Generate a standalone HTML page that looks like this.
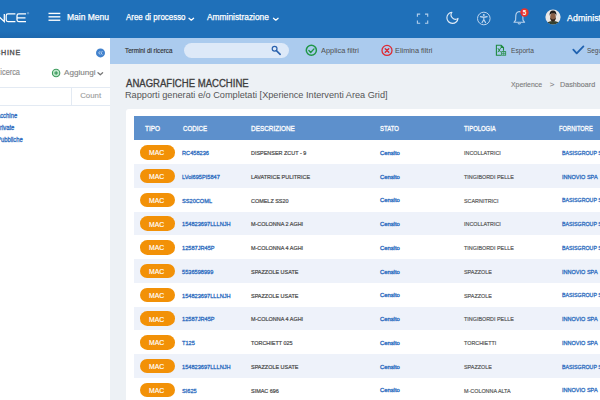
<!DOCTYPE html>
<html><head><meta charset="utf-8">
<style>
*{margin:0;padding:0;box-sizing:border-box}
html,body{width:600px;height:400px;overflow:hidden;background:#edf1f5;font-family:"Liberation Sans",sans-serif;position:relative}
.b{position:absolute}
.t{position:absolute;white-space:nowrap;line-height:1;transform-origin:0 0}
svg{position:absolute;overflow:visible}
</style></head><body>
<div class="b" style="left:0;top:0;width:600px;height:37.5px;background:#1f70b9"></div>
<div class="b" style="left:0;top:37.5px;width:110px;height:362.5px;background:#fff"></div>
<div class="b" style="left:110px;top:37.5px;width:490px;height:26.0px;background:#abcbee"></div>
<div class="b" style="left:0;top:31px;width:110px;height:6.5px;background:linear-gradient(rgba(0,20,60,0),rgba(0,20,60,0.09))"></div>
<!-- sidebar lines -->
<div class="b" style="left:0;top:87px;width:110px;height:1px;background:#e3eaf3"></div>
<div class="b" style="left:0;top:105px;width:110px;height:1px;background:#e3eaf3"></div>
<div class="b" style="left:71px;top:87px;width:1px;height:18px;background:#e3eaf3"></div>
<!-- search input -->
<div class="b" style="left:183.7px;top:42.7px;width:105px;height:15.3px;border-radius:8px;background:#dde9f8"></div>
<!-- card -->
<div class="b" style="left:125.6px;top:109px;width:500px;height:300px;background:#fff;border-radius:3px"></div>
<div class="b" style="left:134px;top:116.3px;width:480px;height:23.95px;background:#5d90cc"></div>
<div class="b" style="left:140px;top:145.00px;width:34.7px;height:14.7px;border-radius:7.35px;background:#f29107"></div>
<div class="b" style="left:134px;top:164.00px;width:480px;height:23.75px;background:#eef2fa"></div>
<div class="b" style="left:140px;top:168.75px;width:34.7px;height:14.7px;border-radius:7.35px;background:#f29107"></div>
<div class="b" style="left:140px;top:192.50px;width:34.7px;height:14.7px;border-radius:7.35px;background:#f29107"></div>
<div class="b" style="left:134px;top:211.50px;width:480px;height:23.75px;background:#eef2fa"></div>
<div class="b" style="left:140px;top:216.25px;width:34.7px;height:14.7px;border-radius:7.35px;background:#f29107"></div>
<div class="b" style="left:140px;top:240.00px;width:34.7px;height:14.7px;border-radius:7.35px;background:#f29107"></div>
<div class="b" style="left:134px;top:259.00px;width:480px;height:23.75px;background:#eef2fa"></div>
<div class="b" style="left:140px;top:263.75px;width:34.7px;height:14.7px;border-radius:7.35px;background:#f29107"></div>
<div class="b" style="left:140px;top:287.50px;width:34.7px;height:14.7px;border-radius:7.35px;background:#f29107"></div>
<div class="b" style="left:134px;top:306.50px;width:480px;height:23.75px;background:#eef2fa"></div>
<div class="b" style="left:140px;top:311.25px;width:34.7px;height:14.7px;border-radius:7.35px;background:#f29107"></div>
<div class="b" style="left:140px;top:335.00px;width:34.7px;height:14.7px;border-radius:7.35px;background:#f29107"></div>
<div class="b" style="left:134px;top:354.00px;width:480px;height:23.75px;background:#eef2fa"></div>
<div class="b" style="left:140px;top:358.75px;width:34.7px;height:14.7px;border-radius:7.35px;background:#f29107"></div>
<div class="b" style="left:140px;top:382.50px;width:34.7px;height:14.7px;border-radius:7.35px;background:#f29107"></div>


<!-- logo -->
<svg style="left:0;top:0" width="40" height="37" viewBox="0 0 40 37">
 <g fill="none" stroke="#fff" stroke-width="1.25" stroke-linecap="butt">
  <path d="M-4 21.6 L-4 13.9 L4.3 21.6 L4.3 13.9"/>
  <path d="M15.4 13.9 L8 13.9 Q6.2 13.9 6.2 15.7 L6.2 19.8 Q6.2 21.6 8 21.6 L15.4 21.6"/>
  <path d="M26 13.9 L18.8 13.9 Q17 13.9 17 15.7 L17 19.8 Q17 21.6 18.8 21.6 L26 21.6 M17 17.75 L25.5 17.75"/>
 </g>
 <circle cx="28" cy="13.2" r="0.8" fill="none" stroke="#cfe0f3" stroke-width="0.4"/>
</svg>
<!-- hamburger -->
<svg style="left:0;top:0" width="70" height="37" viewBox="0 0 70 37">
 <rect x="48.5" y="12.75" width="11.8" height="1.35" fill="#fff"/><rect x="48.5" y="16.15" width="11.8" height="1.35" fill="#fff"/><rect x="48.5" y="19.55" width="11.8" height="1.35" fill="#fff"/>
</svg>
<!-- nav chevrons -->
<svg style="left:0;top:0" width="600" height="37" viewBox="0 0 600 37">
 <g fill="none" stroke="#fff" stroke-width="1.3" stroke-linecap="round" stroke-linejoin="round">
  <path d="M189 18.3 L191.3 20.2 L193.6 18.3"/>
  <path d="M273.5 18.3 L275.8 20.2 L278.1 18.3"/>
 </g>
 <!-- fullscreen -->
 <g fill="none" stroke="#b4cfec" stroke-width="1.1">
  <path d="M417.4 16.8 V14.1 H420.2 M425 14.1 H427.7 V16.8 M427.7 20.5 V23.2 H425 M420.2 23.2 H417.4 V20.5"/>
 </g>
 <!-- moon -->
 <path transform="translate(445 10.4) scale(0.62)" d="M21 12.79A9 9 0 1 1 11.21 3 7 7 0 0 0 21 12.79z" fill="none" stroke="#e2ecf7" stroke-width="1.8" stroke-linejoin="round"/>
 <!-- accessibility -->
 <g fill="none" stroke="#bcd4ee" stroke-width="1">
  <circle cx="483.8" cy="18.5" r="6.3"/>
  <path d="M480.4 16.6 Q483.8 17.6 487.2 16.6 M483.8 17.2 L483.8 19.6 L482 22.6 M483.8 19.6 L485.6 22.6" stroke-width="1.1" stroke-linecap="round"/>
 </g>
 <circle cx="483.8" cy="15" r="1" fill="#bcd4ee"/>
 <!-- bell -->
 <g fill="none" stroke="#bcd4ee" stroke-width="1.1" stroke-linejoin="round">
  <path d="M514 22.3 L524.6 22.3 L523 20.2 L522.8 15.6 Q522.6 12 519.3 11.5 Q516 12 515.8 15.6 L515.6 20.2 Z"/>
  <path d="M517.9 23.4 Q519.3 24.6 520.7 23.4"/>
 </g>
 <circle cx="524.5" cy="12.5" r="4.2" fill="#e8332a"/>
</svg>
<svg style="left:0;top:0" width="600" height="37" viewBox="0 0 600 37"><text x="524.6" y="14.7" font-family="Liberation Sans" font-weight="bold" font-size="6.3" fill="#fff" text-anchor="middle">5</text></svg>
<!-- avatar -->
<svg style="left:0;top:0" width="600" height="37" viewBox="0 0 600 37">
 <defs><clipPath id="av"><circle cx="553" cy="17" r="7.6"/></clipPath></defs>
 <circle cx="553" cy="17" r="7.6" fill="#ebe8e6"/>
 <g clip-path="url(#av)">
  <path d="M545 26 Q546.5 21.2 553 21 Q559.5 21.2 561 26 Z" fill="#35402f"/>
  <ellipse cx="553" cy="16.8" rx="2.8" ry="3.9" fill="#8a5f45"/>
  <path d="M549.6 16 Q549.2 10.6 553 10.6 Q556.8 10.6 556.4 16 Q555.8 13 553 13.2 Q550.2 13 549.6 16 Z" fill="#231d1a"/>
  <path d="M550.1 17.2 Q550.4 21.4 553 21.4 Q555.6 21.4 555.9 17.2 Q555 19.3 553 19.4 Q551 19.3 550.1 17.2 Z" fill="#33261e"/>
 </g>
</svg>

<!-- sidebar collapse -->
<svg style="left:0;top:37px" width="111" height="110" viewBox="0 37 111 110">
 <circle cx="100.5" cy="52.9" r="4.5" fill="#4282cd"/>
 <g fill="none" stroke="#e8f0fa" stroke-width="0.75" stroke-linecap="round" stroke-linejoin="round">
  <path d="M99.9 51.5 L98.7 52.9 L99.9 54.3 M102.1 51.5 L100.9 52.9 L102.1 54.3"/>
 </g>
 <!-- green plus -->
 <circle cx="56.1" cy="73" r="3.7" fill="#bfe6cb" stroke="#3d9c5c" stroke-width="1.1"/>
 <path d="M56.1 71.1 V74.9 M54.2 73 H58" stroke="#1f8a45" stroke-width="0.9"/>
 <!-- chevron -->
 <path d="M98 72.8 L100.3 74.8 L102.6 72.8" fill="none" stroke="#777" stroke-width="1.3" stroke-linecap="round" stroke-linejoin="round"/>
</svg>

<!-- filter bar icons -->
<svg style="left:0;top:37px" width="600" height="27" viewBox="0 37 600 27">
 <!-- search -->
 <circle cx="274.6" cy="48.8" r="2.4" fill="none" stroke="#2a62ae" stroke-width="1.2"/>
 <path d="M276.4 50.7 L280.2 54.3" stroke="#2a62ae" stroke-width="1.6" stroke-linecap="round"/>
 <!-- green check circle -->
 <circle cx="311.35" cy="50.25" r="5.05" fill="none" stroke="#1f9646" stroke-width="1.5"/>
 <path d="M308.9 50.6 L310.7 52.5 L314 48.9" fill="none" stroke="#1f9646" stroke-width="1.4" stroke-linecap="round" stroke-linejoin="round"/>
 <!-- red x circle -->
 <circle cx="387" cy="50.45" r="5" fill="none" stroke="#de2a33" stroke-width="1.3"/>
 <path d="M385.25 48.7 L388.75 52.2 M388.75 48.7 L385.25 52.2" stroke="#dc2630" stroke-width="1.4" stroke-linecap="round"/>
 <!-- excel -->
 <g fill="none" stroke="#1f8a40" stroke-width="1.1">
  <path d="M501.3 55.3 H496.4 V45.2 H501.2 L503.5 47.5 V50.8"/>
  <path d="M501.2 45.2 V47.5 H503.5" fill="#1f8a40"/>
  <path d="M497.9 48.2 L500.6 52.2 M500.6 48.2 L497.9 52.2" stroke-width="1"/>
  <rect x="501.7" y="51.6" width="4" height="3.6" stroke-width="0.8"/>
  <path d="M503.7 51.6 V55.2 M501.7 53.4 H505.7" stroke-width="0.6"/>
 </g>
 <!-- blue check -->
 <path d="M573.3 49.7 L576.7 53.3 L583.4 46.4" fill="none" stroke="#1f62b0" stroke-width="1.8" stroke-linecap="round" stroke-linejoin="round"/>
</svg>

<div class="t" style="left:66.82px;top:12.92px;font-size:8.714px;color:#fff;transform:scaleX(0.9753);-webkit-text-stroke:0.25px #fff;">Main Menu</div>
<div class="t" style="left:126.00px;top:12.92px;font-size:8.714px;color:#fff;transform:scaleX(0.9112);-webkit-text-stroke:0.25px #fff;">Aree di processo</div>
<div class="t" style="left:207.00px;top:12.92px;font-size:8.714px;color:#fff;transform:scaleX(0.9627);-webkit-text-stroke:0.25px #fff;">Amministrazione</div>
<div class="t" style="left:567.10px;top:13.50px;font-size:8.857px;color:#fff;-webkit-text-stroke:0.25px #fff;">Administrator</div>
<div class="t" style="left:-22.73px;top:50.25px;font-size:7.143px;color:#555;-webkit-text-stroke:0.35px #555;letter-spacing:0.7px;">MACCHINE</div>
<div class="t" style="left:-5.01px;top:68.04px;font-size:8.571px;color:#8c8c8c;transform:scaleX(0.8600);-webkit-text-stroke:0.15px #8c8c8c;">Ricerca</div>
<div class="t" style="left:64.40px;top:68.69px;font-size:7.571px;color:#888;transform:scaleX(1.0690);-webkit-text-stroke:0.15px #888;">Aggiungi</div>
<div class="t" style="left:80.21px;top:91.95px;font-size:7.857px;color:#999;-webkit-text-stroke:0.10px #999;">Count</div>
<div class="t" style="left:-8.03px;top:113.40px;font-size:6.857px;color:#2d6cc0;transform:scaleX(0.8600);-webkit-text-stroke:0.30px #2d6cc0;">Macchine</div>
<div class="t" style="left:-4.14px;top:124.70px;font-size:6.857px;color:#2d6cc0;transform:scaleX(0.8600);-webkit-text-stroke:0.30px #2d6cc0;">Private</div>
<div class="t" style="left:-2.69px;top:136.80px;font-size:6.857px;color:#2d6cc0;transform:scaleX(0.8600);-webkit-text-stroke:0.30px #2d6cc0;">Pubbliche</div>
<div class="t" style="left:125.47px;top:47.95px;font-size:7.143px;color:#333;transform:scaleX(0.8800);-webkit-text-stroke:0.15px #333;">Termini di ricerca</div>
<div class="t" style="left:321.25px;top:48.15px;font-size:7.143px;color:#505050;transform:scaleX(1.0395);">Applica filtri</div>
<div class="t" style="left:394.91px;top:48.15px;font-size:7.143px;color:#505050;transform:scaleX(1.0282);">Elimina filtri</div>
<div class="t" style="left:511.07px;top:48.15px;font-size:7.143px;color:#505050;transform:scaleX(0.9305);">Esporta</div>
<div class="t" style="left:586.64px;top:48.15px;font-size:7.143px;color:#505050;transform:scaleX(0.9000);">Seguici</div>
<div class="t" style="left:125.80px;top:78.31px;font-size:10.857px;color:#3d3d3d;transform:scaleX(0.8816);-webkit-text-stroke:0.32px #3d3d3d;">ANAGRAFICHE MACCHINE</div>
<div class="t" style="left:125.07px;top:90.58px;font-size:9.000px;color:#555;transform:scaleX(1.0191);">Rapporti generati e/o Completati [Xperience Interventi Area Grid]</div>
<div class="t" style="left:511.16px;top:80.59px;font-size:7.571px;color:#7c7c7c;transform:scaleX(0.9118);-webkit-text-stroke:0.12px #7c7c7c;">Xperience</div>
<div class="t" style="left:549.76px;top:81.03px;font-size:8.000px;color:#7c7c7c;-webkit-text-stroke:0.12px #7c7c7c;">&gt;</div>
<div class="t" style="left:560.22px;top:80.59px;font-size:7.571px;color:#7c7c7c;transform:scaleX(0.9498);-webkit-text-stroke:0.12px #7c7c7c;">Dashboard</div>
<div class="t" style="left:145.07px;top:124.79px;font-size:7.571px;color:#fff;transform:scaleX(0.8511);-webkit-text-stroke:0.30px #fff;">TIPO</div>
<div class="t" style="left:183.39px;top:124.79px;font-size:7.571px;color:#fff;transform:scaleX(0.8163);-webkit-text-stroke:0.30px #fff;">CODICE</div>
<div class="t" style="left:250.79px;top:124.79px;font-size:7.571px;color:#fff;transform:scaleX(0.8475);-webkit-text-stroke:0.30px #fff;">DESCRIZIONE</div>
<div class="t" style="left:380.46px;top:124.79px;font-size:7.571px;color:#fff;transform:scaleX(0.7849);-webkit-text-stroke:0.30px #fff;">STATO</div>
<div class="t" style="left:464.48px;top:124.79px;font-size:7.571px;color:#fff;transform:scaleX(0.7792);-webkit-text-stroke:0.30px #fff;">TIPOLOGIA</div>
<div class="t" style="left:559.24px;top:124.79px;font-size:7.571px;color:#fff;transform:scaleX(0.7621);-webkit-text-stroke:0.30px #fff;">FORNITORE</div>
<div class="t" style="left:181.55px;top:150.02px;font-size:6.000px;color:#2d6cc0;transform:scaleX(0.9400);-webkit-text-stroke:0.30px #2d6cc0;">RC458236</div>
<div class="t" style="left:250.56px;top:150.02px;font-size:6.000px;color:#4c4c4c;transform:scaleX(0.9083);-webkit-text-stroke:0.22px #4c4c4c;">DISPENSER ZCUT - 9</div>
<div class="t" style="left:380.41px;top:149.90px;font-size:6.143px;color:#2d6cc0;transform:scaleX(0.9507);-webkit-text-stroke:0.35px #2d6cc0;">Censito</div>
<div class="t" style="left:463.91px;top:150.02px;font-size:6.000px;color:#555;transform:scaleX(0.9000);-webkit-text-stroke:0.18px #555;">INCOLLATRICI</div>
<div class="t" style="left:561.78px;top:149.90px;font-size:6.143px;color:#2d6cc0;transform:scaleX(0.8628);-webkit-text-stroke:0.30px #2d6cc0;">BASISGROUP SPA</div>
<div class="t" style="left:149.15px;top:150.25px;font-size:7.143px;color:#fff;transform:scaleX(0.9618);-webkit-text-stroke:0.15px #fff;">MAC</div>
<div class="t" style="left:181.55px;top:173.77px;font-size:6.000px;color:#2d6cc0;transform:scaleX(0.9400);-webkit-text-stroke:0.30px #2d6cc0;">LVol695PI5847</div>
<div class="t" style="left:250.56px;top:173.77px;font-size:6.000px;color:#4c4c4c;transform:scaleX(0.9083);-webkit-text-stroke:0.22px #4c4c4c;">LAVATRICE PULITRICE</div>
<div class="t" style="left:380.41px;top:173.65px;font-size:6.143px;color:#2d6cc0;transform:scaleX(0.9507);-webkit-text-stroke:0.35px #2d6cc0;">Censito</div>
<div class="t" style="left:464.29px;top:173.77px;font-size:6.000px;color:#555;transform:scaleX(0.9000);-webkit-text-stroke:0.18px #555;">TINGIBORDI PELLE</div>
<div class="t" style="left:561.70px;top:173.65px;font-size:6.143px;color:#2d6cc0;transform:scaleX(0.9035);-webkit-text-stroke:0.30px #2d6cc0;">INNOVIO SPA</div>
<div class="t" style="left:149.15px;top:174.00px;font-size:7.143px;color:#fff;transform:scaleX(0.9618);-webkit-text-stroke:0.15px #fff;">MAC</div>
<div class="t" style="left:181.77px;top:197.52px;font-size:6.000px;color:#2d6cc0;transform:scaleX(0.9400);-webkit-text-stroke:0.30px #2d6cc0;">SS20COML</div>
<div class="t" style="left:250.73px;top:197.52px;font-size:6.000px;color:#4c4c4c;transform:scaleX(0.9083);-webkit-text-stroke:0.22px #4c4c4c;">COMELZ SS20</div>
<div class="t" style="left:380.41px;top:197.40px;font-size:6.143px;color:#2d6cc0;transform:scaleX(0.9507);-webkit-text-stroke:0.35px #2d6cc0;">Censito</div>
<div class="t" style="left:464.18px;top:197.52px;font-size:6.000px;color:#555;transform:scaleX(0.9000);-webkit-text-stroke:0.18px #555;">SCARNITRICI</div>
<div class="t" style="left:561.78px;top:197.40px;font-size:6.143px;color:#2d6cc0;transform:scaleX(0.8628);-webkit-text-stroke:0.30px #2d6cc0;">BASISGROUP SPA</div>
<div class="t" style="left:149.15px;top:197.75px;font-size:7.143px;color:#fff;transform:scaleX(0.9618);-webkit-text-stroke:0.15px #fff;">MAC</div>
<div class="t" style="left:181.61px;top:221.27px;font-size:6.000px;color:#2d6cc0;transform:scaleX(0.9400);-webkit-text-stroke:0.30px #2d6cc0;">154823697LLLNJH</div>
<div class="t" style="left:250.56px;top:221.27px;font-size:6.000px;color:#4c4c4c;transform:scaleX(0.9083);-webkit-text-stroke:0.22px #4c4c4c;">M-COLONNA 2 AGHI</div>
<div class="t" style="left:380.41px;top:221.15px;font-size:6.143px;color:#2d6cc0;transform:scaleX(0.9507);-webkit-text-stroke:0.35px #2d6cc0;">Censito</div>
<div class="t" style="left:463.91px;top:221.27px;font-size:6.000px;color:#555;transform:scaleX(0.9000);-webkit-text-stroke:0.18px #555;">INCOLLATRICI</div>
<div class="t" style="left:561.78px;top:221.15px;font-size:6.143px;color:#2d6cc0;transform:scaleX(0.8628);-webkit-text-stroke:0.30px #2d6cc0;">BASISGROUP SPA</div>
<div class="t" style="left:149.15px;top:221.50px;font-size:7.143px;color:#fff;transform:scaleX(0.9618);-webkit-text-stroke:0.15px #fff;">MAC</div>
<div class="t" style="left:181.61px;top:245.02px;font-size:6.000px;color:#2d6cc0;transform:scaleX(0.9400);-webkit-text-stroke:0.30px #2d6cc0;">12587JR45P</div>
<div class="t" style="left:250.56px;top:245.02px;font-size:6.000px;color:#4c4c4c;transform:scaleX(0.9083);-webkit-text-stroke:0.22px #4c4c4c;">M-COLONNA 4 AGHI</div>
<div class="t" style="left:380.41px;top:244.90px;font-size:6.143px;color:#2d6cc0;transform:scaleX(0.9507);-webkit-text-stroke:0.35px #2d6cc0;">Censito</div>
<div class="t" style="left:464.29px;top:245.02px;font-size:6.000px;color:#555;transform:scaleX(0.9000);-webkit-text-stroke:0.18px #555;">TINGIBORDI PELLE</div>
<div class="t" style="left:561.78px;top:244.90px;font-size:6.143px;color:#2d6cc0;transform:scaleX(0.8628);-webkit-text-stroke:0.30px #2d6cc0;">BASISGROUP SPA</div>
<div class="t" style="left:149.15px;top:245.25px;font-size:7.143px;color:#fff;transform:scaleX(0.9618);-webkit-text-stroke:0.15px #fff;">MAC</div>
<div class="t" style="left:181.77px;top:268.77px;font-size:6.000px;color:#2d6cc0;transform:scaleX(0.9400);-webkit-text-stroke:0.30px #2d6cc0;">5536598999</div>
<div class="t" style="left:250.78px;top:268.77px;font-size:6.000px;color:#4c4c4c;transform:scaleX(0.9083);-webkit-text-stroke:0.22px #4c4c4c;">SPAZZOLE USATE</div>
<div class="t" style="left:380.41px;top:268.65px;font-size:6.143px;color:#2d6cc0;transform:scaleX(0.9507);-webkit-text-stroke:0.35px #2d6cc0;">Censito</div>
<div class="t" style="left:464.18px;top:268.77px;font-size:6.000px;color:#555;transform:scaleX(0.9000);-webkit-text-stroke:0.18px #555;">SPAZZOLE</div>
<div class="t" style="left:561.70px;top:268.65px;font-size:6.143px;color:#2d6cc0;transform:scaleX(0.9035);-webkit-text-stroke:0.30px #2d6cc0;">INNOVIO SPA</div>
<div class="t" style="left:149.15px;top:269.00px;font-size:7.143px;color:#fff;transform:scaleX(0.9618);-webkit-text-stroke:0.15px #fff;">MAC</div>
<div class="t" style="left:181.61px;top:292.52px;font-size:6.000px;color:#2d6cc0;transform:scaleX(0.9400);-webkit-text-stroke:0.30px #2d6cc0;">154823697LLLNJH</div>
<div class="t" style="left:250.78px;top:292.52px;font-size:6.000px;color:#4c4c4c;transform:scaleX(0.9083);-webkit-text-stroke:0.22px #4c4c4c;">SPAZZOLE USATE</div>
<div class="t" style="left:380.41px;top:292.40px;font-size:6.143px;color:#2d6cc0;transform:scaleX(0.9507);-webkit-text-stroke:0.35px #2d6cc0;">Censito</div>
<div class="t" style="left:464.18px;top:292.52px;font-size:6.000px;color:#555;transform:scaleX(0.9000);-webkit-text-stroke:0.18px #555;">SPAZZOLE</div>
<div class="t" style="left:561.78px;top:292.40px;font-size:6.143px;color:#2d6cc0;transform:scaleX(0.8628);-webkit-text-stroke:0.30px #2d6cc0;">BASISGROUP SPA</div>
<div class="t" style="left:149.15px;top:292.75px;font-size:7.143px;color:#fff;transform:scaleX(0.9618);-webkit-text-stroke:0.15px #fff;">MAC</div>
<div class="t" style="left:181.61px;top:316.27px;font-size:6.000px;color:#2d6cc0;transform:scaleX(0.9400);-webkit-text-stroke:0.30px #2d6cc0;">12587JR45P</div>
<div class="t" style="left:250.56px;top:316.27px;font-size:6.000px;color:#4c4c4c;transform:scaleX(0.9083);-webkit-text-stroke:0.22px #4c4c4c;">M-COLONNA 4 AGHI</div>
<div class="t" style="left:380.41px;top:316.15px;font-size:6.143px;color:#2d6cc0;transform:scaleX(0.9507);-webkit-text-stroke:0.35px #2d6cc0;">Censito</div>
<div class="t" style="left:464.29px;top:316.27px;font-size:6.000px;color:#555;transform:scaleX(0.9000);-webkit-text-stroke:0.18px #555;">TINGIBORDI PELLE</div>
<div class="t" style="left:561.70px;top:316.15px;font-size:6.143px;color:#2d6cc0;transform:scaleX(0.9035);-webkit-text-stroke:0.30px #2d6cc0;">INNOVIO SPA</div>
<div class="t" style="left:149.15px;top:316.50px;font-size:7.143px;color:#fff;transform:scaleX(0.9618);-webkit-text-stroke:0.15px #fff;">MAC</div>
<div class="t" style="left:181.89px;top:340.02px;font-size:6.000px;color:#2d6cc0;transform:scaleX(0.9400);-webkit-text-stroke:0.30px #2d6cc0;">T125</div>
<div class="t" style="left:250.89px;top:340.02px;font-size:6.000px;color:#4c4c4c;transform:scaleX(0.9083);-webkit-text-stroke:0.22px #4c4c4c;">TORCHIETT 025</div>
<div class="t" style="left:380.41px;top:339.90px;font-size:6.143px;color:#2d6cc0;transform:scaleX(0.9507);-webkit-text-stroke:0.35px #2d6cc0;">Censito</div>
<div class="t" style="left:464.29px;top:340.02px;font-size:6.000px;color:#555;transform:scaleX(0.9000);-webkit-text-stroke:0.18px #555;">TORCHIETTI</div>
<div class="t" style="left:561.70px;top:339.90px;font-size:6.143px;color:#2d6cc0;transform:scaleX(0.9035);-webkit-text-stroke:0.30px #2d6cc0;">INNOVIO SPA</div>
<div class="t" style="left:149.15px;top:340.25px;font-size:7.143px;color:#fff;transform:scaleX(0.9618);-webkit-text-stroke:0.15px #fff;">MAC</div>
<div class="t" style="left:181.61px;top:363.77px;font-size:6.000px;color:#2d6cc0;transform:scaleX(0.9400);-webkit-text-stroke:0.30px #2d6cc0;">154823697LLLNJH</div>
<div class="t" style="left:250.78px;top:363.77px;font-size:6.000px;color:#4c4c4c;transform:scaleX(0.9083);-webkit-text-stroke:0.22px #4c4c4c;">SPAZZOLE USATE</div>
<div class="t" style="left:380.41px;top:363.65px;font-size:6.143px;color:#2d6cc0;transform:scaleX(0.9507);-webkit-text-stroke:0.35px #2d6cc0;">Censito</div>
<div class="t" style="left:464.18px;top:363.77px;font-size:6.000px;color:#555;transform:scaleX(0.9000);-webkit-text-stroke:0.18px #555;">SPAZZOLE</div>
<div class="t" style="left:561.78px;top:363.65px;font-size:6.143px;color:#2d6cc0;transform:scaleX(0.8628);-webkit-text-stroke:0.30px #2d6cc0;">BASISGROUP SPA</div>
<div class="t" style="left:149.15px;top:364.00px;font-size:7.143px;color:#fff;transform:scaleX(0.9618);-webkit-text-stroke:0.15px #fff;">MAC</div>
<div class="t" style="left:181.77px;top:387.52px;font-size:6.000px;color:#2d6cc0;transform:scaleX(0.9400);-webkit-text-stroke:0.30px #2d6cc0;">SI625</div>
<div class="t" style="left:250.78px;top:387.52px;font-size:6.000px;color:#4c4c4c;transform:scaleX(0.9083);-webkit-text-stroke:0.22px #4c4c4c;">SIMAC 696</div>
<div class="t" style="left:380.41px;top:387.40px;font-size:6.143px;color:#2d6cc0;transform:scaleX(0.9507);-webkit-text-stroke:0.35px #2d6cc0;">Censito</div>
<div class="t" style="left:463.97px;top:387.52px;font-size:6.000px;color:#555;transform:scaleX(0.9000);-webkit-text-stroke:0.18px #555;">M-COLONNA ALTA</div>
<div class="t" style="left:561.70px;top:387.40px;font-size:6.143px;color:#2d6cc0;transform:scaleX(0.9035);-webkit-text-stroke:0.30px #2d6cc0;">INNOVIO SPA</div>
<div class="t" style="left:149.15px;top:387.75px;font-size:7.143px;color:#fff;transform:scaleX(0.9618);-webkit-text-stroke:0.15px #fff;">MAC</div>
</body></html>
